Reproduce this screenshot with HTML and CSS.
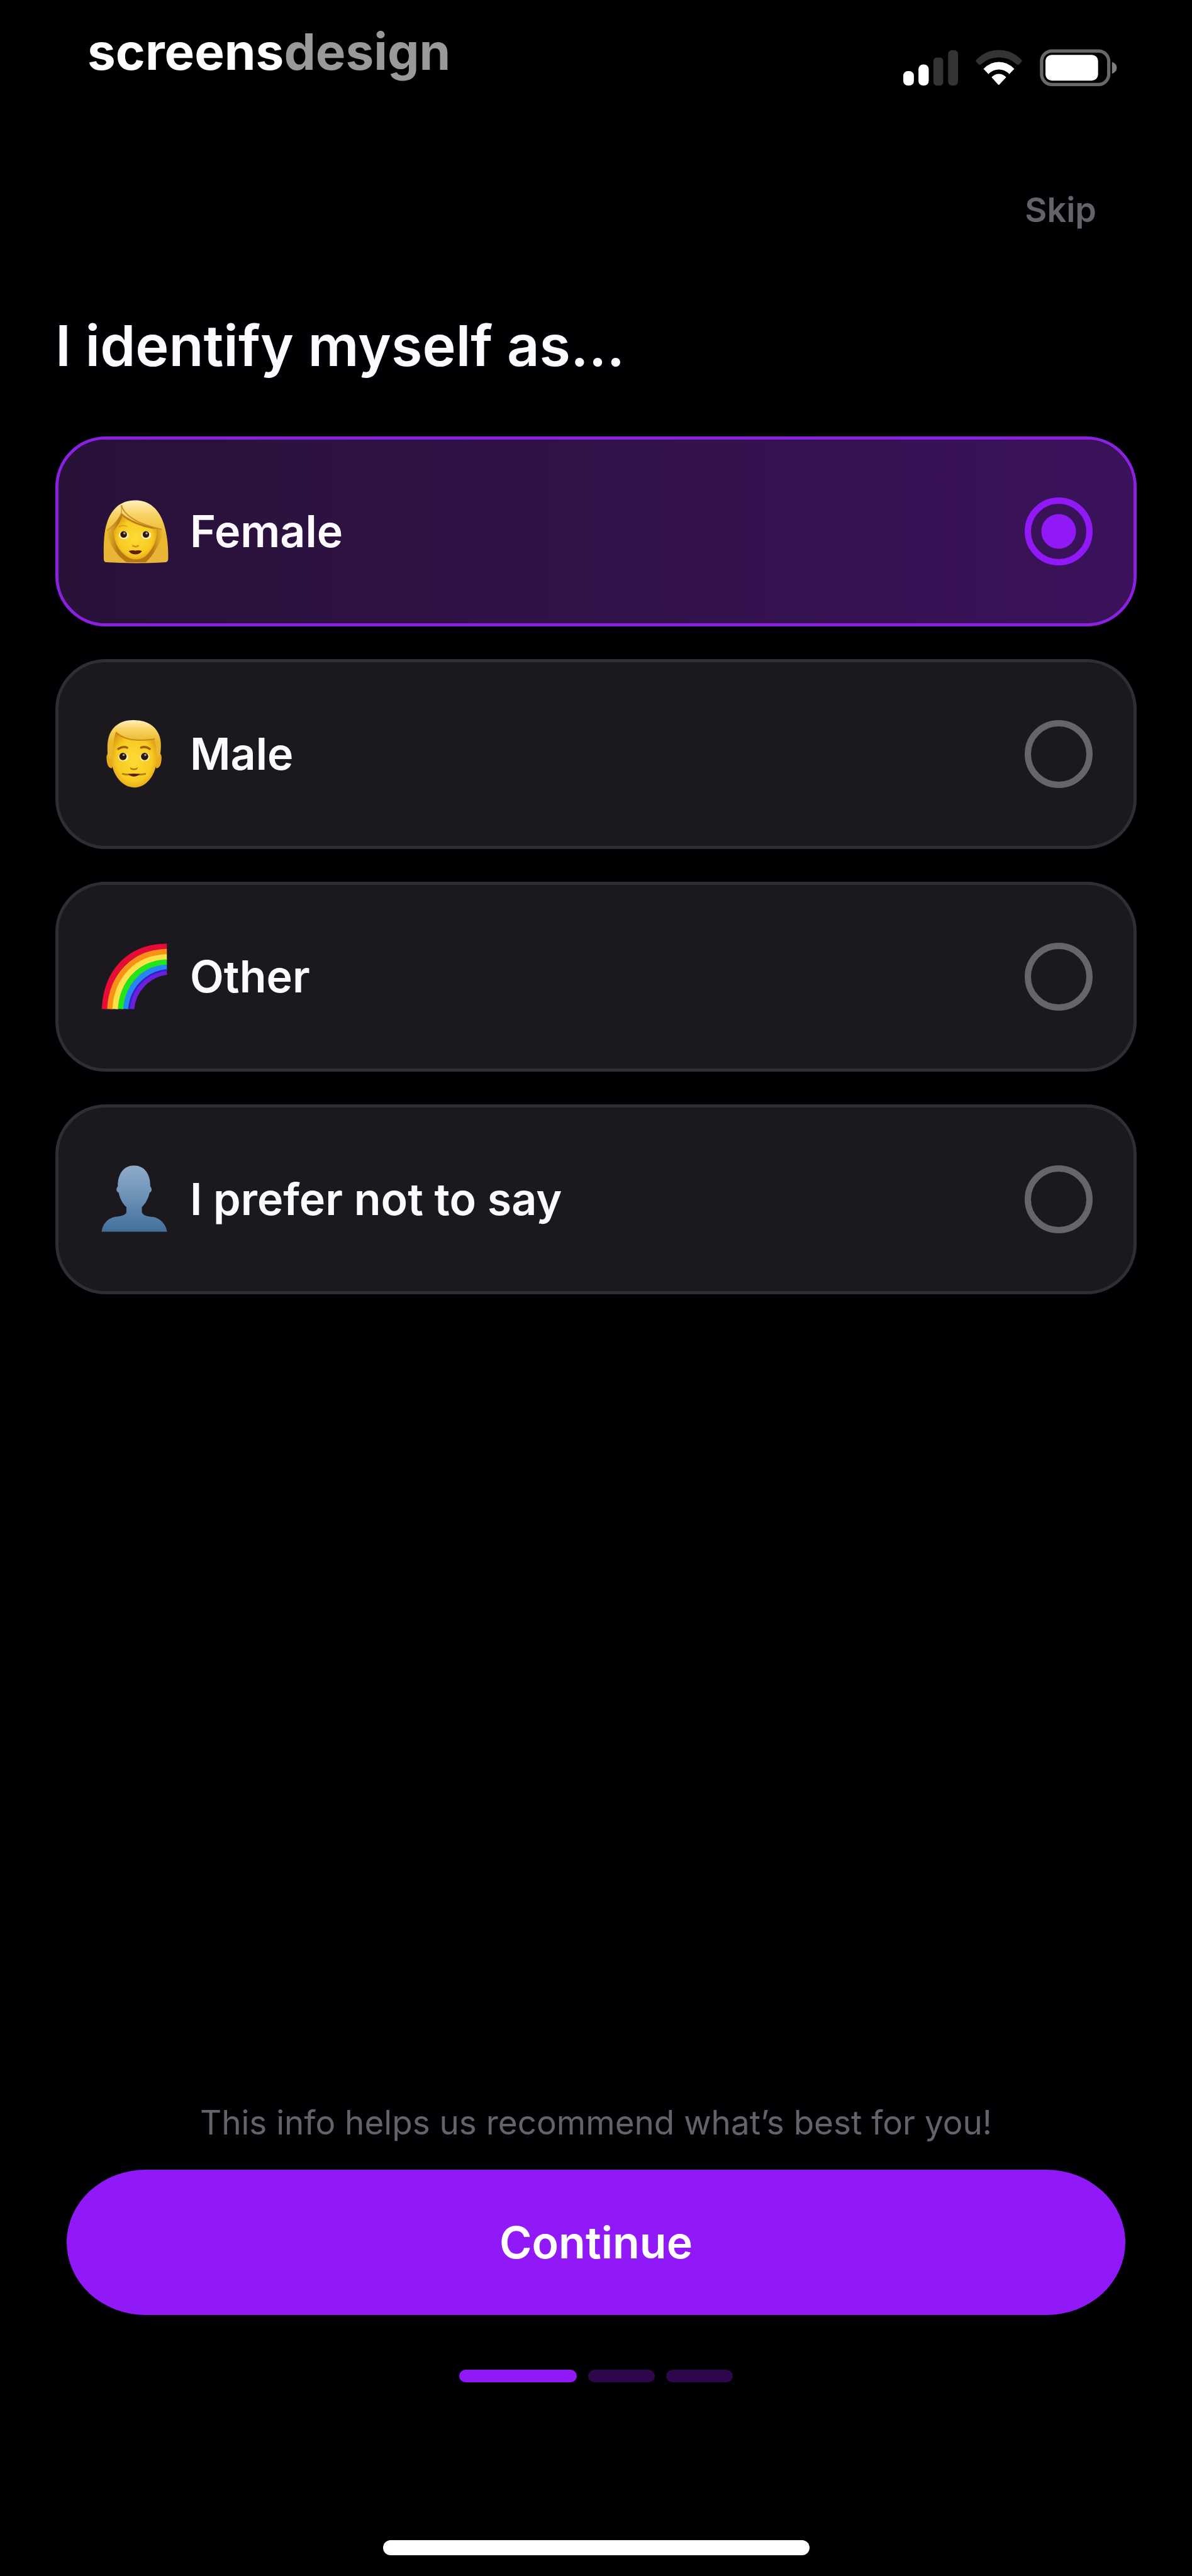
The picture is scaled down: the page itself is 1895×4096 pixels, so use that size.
FILE: index.html
```html
<!DOCTYPE html>
<html lang="en">
<head>
<meta charset="utf-8">
<meta name="viewport" content="width=device-width, initial-scale=1">
<title>I identify myself as...</title>
<link rel="stylesheet" href="styles.css">
</head>
<body>
<div class="screen">
  <header class="status-bar">
    <div class="brand">screens<span class="brand-muted">design</span></div>
    <div class="status-icons">
      <svg class="signal" viewBox="167 85 299 205" role="img" aria-label="Signal">
        <rect x="167" y="205" width="58" height="79" rx="25" fill="#fff"/>
        <rect x="250" y="169" width="56" height="115" rx="25" fill="#fff"/>
        <rect x="332" y="131" width="53" height="153" rx="18" fill="#353336"/>
        <rect x="412" y="90" width="54" height="194" rx="22" fill="#353336"/>
      </svg>
      <svg class="wifi" viewBox="562 85 254 205" role="img" aria-label="Wi-Fi">
        <path d="M566 143Q618 90 689 90T812 143Q817 149 812 155L799 168Q793 174 786 168Q744 130 689 130T592 168Q585 174 579 168L566 155Q561 149 566 143Z" fill="#353336"/>
        <path d="M605 193Q640 155 689 155T773 193L746 221Q721 196 689 196T632 221Z" fill="#fff"/>
        <path d="M649 238Q667 220 689 220T729 238L692 278Q688 282 684 278Z" fill="#fff"/>
      </svg>
      <svg class="battery" viewBox="910 85 422 205" role="img" aria-label="Battery">
        <rect x="920" y="95" width="366" height="183" rx="56" fill="none" stroke="#69676a" stroke-width="18"/>
        <rect x="941" y="116" width="287" height="141" rx="34" fill="#fff"/>
        <path d="M1304 155Q1330 164 1330 187T1304 219Z" fill="#807e81"/>
      </svg>
    </div>
  </header>

  <nav class="top-nav"><button class="skip" type="button">Skip</button></nav>

  <main class="content">
    <h1 class="title" id="question">I identify myself as...</h1>
    <form class="options" role="radiogroup" aria-labelledby="question">
      <label class="option">
        <svg class="emoji" viewBox="60 56 390 390" aria-hidden="true">
          <defs>
            <linearGradient id="hair" x1="0" y1="0" x2="0" y2="1">
              <stop offset="0" stop-color="#fff0bd"/><stop offset=".22" stop-color="#f8d465"/><stop offset=".55" stop-color="#eab92c"/><stop offset="1" stop-color="#e9b43a"/>
            </linearGradient>
            <radialGradient id="face" cx=".5" cy=".5" r=".6">
              <stop offset="0" stop-color="#fddc35"/><stop offset=".65" stop-color="#f8ca22"/><stop offset="1" stop-color="#d99312"/>
            </radialGradient>
            <linearGradient id="shade" x1="0" y1="0" x2="1" y2="0">
              <stop offset="0" stop-color="#b5740c" stop-opacity="0"/><stop offset=".2" stop-color="#ac680b" stop-opacity=".8"/><stop offset=".8" stop-color="#ac680b" stop-opacity=".8"/><stop offset="1" stop-color="#b5740c" stop-opacity="0"/>
            </linearGradient>
          </defs>
          <path d="M84 404C82 330 84 255 100 208C124 130 175 82 254 82C336 82 388 135 412 215C430 275 436 340 434 402Q433 416 420 419Q255 428 98 419Q85 417 84 404Z" fill="url(#hair)"/>
          <path d="M98 243C130 220 160 190 180 150C230 200 340 230 408 244C395 315 350 385 312 419H208C155 380 115 330 98 243Z" fill="url(#shade)"/>
          <path d="M138 250C155 225 176 200 184 165C225 205 305 232 372 240C375 300 350 350 312 385Q258 422 205 385C160 350 138 305 138 250Z" fill="url(#face)"/>
          <path d="M180 108C188 155 260 212 400 240" fill="none" stroke="#b97b16" stroke-width="7" opacity=".75"/>
          <path d="M178 110C190 160 165 205 100 247" fill="none" stroke="#c18a1c" stroke-width="6" opacity=".65"/>
          <path d="M166 227Q188 213 211 224M296 224Q320 213 344 228" fill="none" stroke="#b98213" stroke-width="7" opacity=".5"/>
          <ellipse cx="193" cy="271" rx="27" ry="22" fill="#fff1b6"/><ellipse cx="315" cy="271" rx="27" ry="22" fill="#fff1b6"/>
          <circle cx="192" cy="267" r="18" fill="#30180d"/><circle cx="313" cy="267" r="18" fill="#30180d"/>
          <circle cx="196" cy="261" r="6" fill="#aca2a0"/><circle cx="317" cy="261" r="6" fill="#aca2a0"/>
          <path d="M239 327Q257 340 275 327" fill="none" stroke="#d39410" stroke-width="9"/>
          <path d="M219 358Q240 351 256 356Q272 351 292 358Q278 376 256 376T219 358Z" fill="#641d0b"/>
        </svg>
        <span class="option-text">Female</span>
        <input class="radio" type="radio" name="identity" checked>
      </label>
      <label class="option">
        <svg class="emoji" viewBox="60 67 390 390" aria-hidden="true">
          <path d="M107 262C96 262 98 290 102 310Q108 338 127 340L145 300V250ZM390 262C401 262 399 290 395 310Q389 338 370 340L352 300V250Z" fill="#e6aa1c"/>
          <path d="M105 265C101 205 105 160 135 123C170 82 220 76 257 78C320 80 362 108 381 150C397 183 397 220 391 265L375 290L120 290Z" fill="url(#hair)"/>
          <path d="M150 140C132 180 140 240 124 288C128 370 180 444 250 444S370 370 374 285C368 250 375 205 352 180C280 195 200 185 150 140Z" fill="url(#face)"/>
          <path d="M150 144C195 187 275 194 362 180" fill="none" stroke="#bd7e13" stroke-width="7" opacity=".8"/>
          <path d="M163 234Q188 218 211 227M287 227Q312 218 334 234" fill="none" stroke="#99600e" stroke-width="12" stroke-linecap="round"/>
          <ellipse cx="190" cy="278" rx="27" ry="22" fill="#fff1b6"/><ellipse cx="307" cy="278" rx="27" ry="22" fill="#fff1b6"/>
          <circle cx="188" cy="275" r="20" fill="#2b180d"/><circle cx="306" cy="275" r="20" fill="#2b180d"/>
          <circle cx="192" cy="267" r="6" fill="#a19793"/><circle cx="310" cy="267" r="6" fill="#a19793"/>
          <path d="M226 333Q248 348 270 333L265 345Q248 353 230 345Z" fill="#b9780c"/>
          <path d="M183 365Q215 371 248 368Q281 371 313 365V374Q290 379 272 378Q248 390 224 378Q204 379 183 374Z" fill="#b67b13"/>
          <path d="M216 371Q248 366 280 371Q266 384 248 384T216 371Z" fill="#551b0a"/>
        </svg>
        <span class="option-text">Male</span>
        <input class="radio" type="radio" name="identity">
      </label>
      <label class="option">
        <svg class="emoji" viewBox="60 79 390 390" aria-hidden="true">
          <g fill="none" stroke-width="32">
            <path d="M89 450C98 250 220 112 427 110" stroke="#e80b37"/>
            <path d="M118 450C128 270 245 142 427 139" stroke="#f99119"/>
            <path d="M147 450C156 285 265 171 427 168" stroke="#fde148"/>
            <path d="M176 450C188 305 283 200 427 196" stroke="#23e51c"/>
            <path d="M205 450C216 325 302 228 427 225" stroke="#2687f2"/>
            <path d="M235 450C246 345 325 262 427 250" stroke="#6b20dc" stroke-width="28"/>
            <path d="M221 450C232 335 315 248 427 238" stroke="#3222c9" stroke-width="10"/>
          </g>
        </svg>
        <span class="option-text">Other</span>
        <input class="radio" type="radio" name="identity">
      </label>
      <label class="option">
        <svg class="emoji" viewBox="60 90 390 390" aria-hidden="true">
          <defs><linearGradient id="bust" x1="0" y1="0" x2="0" y2="1"><stop offset="0" stop-color="#8eacc9"/><stop offset=".45" stop-color="#6e93b8"/><stop offset="1" stop-color="#426f9a"/></linearGradient></defs>
          <path d="M72 461C77 420 105 388 145 380C177 377 201 373 207 354V327C186 310 171 278 165 249C151 245 149 226 160 216C159 149 190 101 248 101C307 101 338 149 337 216C348 226 346 245 333 249C327 278 310 310 291 327V354C297 373 320 378 352 381C392 388 421 420 428 461Z" fill="url(#bust)"/>
        </svg>
        <span class="option-text">I prefer not to say</span>
        <input class="radio" type="radio" name="identity">
      </label>
    </form>
  </main>

  <footer class="footer">
    <p class="hint">This info helps us recommend what’s best for you!</p>
    <button class="continue" type="button">Continue</button>
    <div class="steps" role="img" aria-label="Step 1 of 3">
      <span class="step step-current"></span><span class="step"></span><span class="step"></span>
    </div>
    <div class="home-indicator"></div>
  </footer>
</div>
</body>
</html>
```
FILE: styles.css
```css
* { box-sizing: border-box; }
body {
  margin: 0;
  background: #000002;
  color: #fdfaff;
  font-family: Inter, "Liberation Sans", sans-serif;
}
button { border: 0; padding: 0; font: inherit; cursor: pointer; }
.screen { display: flex; flex-direction: column; min-height: 100vh; }

.status-bar {
  display: flex;
  justify-content: space-between;
  align-items: flex-start;
  padding: 32px 119px 0 139px;
}
.brand { font-size: 80px; line-height: 100px; font-weight: 700; color: #fff; }
.brand-muted { color: #999; }
.status-icons { display: flex; gap: 28px; padding-top: 46px; }
.status-icons svg { display: block; height: 60px; }
.signal { width: 87px; }
.wifi { width: 74px; }
.battery { width: 123px; }

.top-nav { display: flex; justify-content: flex-end; padding: 164px 152px 0 0; }
.skip { background: none; color: #656368; font-size: 54px; line-height: 64px; font-weight: 600; }

.content { padding: 124px 88px 0; }
.title { margin: 0 0 84px; font-size: 90px; line-height: 120px; font-weight: 600; }
.options { display: flex; flex-direction: column; gap: 52px; }
.option {
  display: flex;
  align-items: center;
  gap: 30px;
  height: 302px;
  padding: 0 65px;
  border: 5px solid #302e33;
  border-radius: 80px;
  background: #1b191e;
  cursor: pointer;
}
.option:has(.radio:checked) {
  border-color: #8a21e0;
  background: linear-gradient(90deg, #281238, #3b125b) padding-box;
}
.emoji { flex: none; width: 114px; height: 114px; }
.option-text { flex: 1; font-size: 70px; line-height: 84px; font-weight: 600; }
.radio {
  appearance: none;
  flex: none;
  width: 108px;
  height: 108px;
  margin: 0;
  border: 10px solid #67656a;
  border-radius: 50%;
}
.radio:checked {
  border-color: #9119f8;
  background: radial-gradient(circle, #9119f8 27px, transparent 28px);
}

.footer {
  display: flex;
  flex-direction: column;
  align-items: center;
  margin-top: auto;
  padding: 0 106px 33px;
}
.hint { margin: 0 0 43px; color: #656368; font-size: 53px; line-height: 64px; text-align: center; }
.continue {
  width: 100%;
  height: 231px;
  border-radius: 126px / 116px;
  background: #9119f8;
  color: #fff;
  font-size: 70px;
  font-weight: 600;
}
.steps { display: flex; gap: 18px; margin: 87px 0 251px; }
.step { width: 106px; height: 20px; border-radius: 10px; background: #2d074a; }
.step-current { width: 187px; background: #9119f8; }
.home-indicator { width: 678px; height: 24px; border-radius: 12px; background: #fff; }
```
